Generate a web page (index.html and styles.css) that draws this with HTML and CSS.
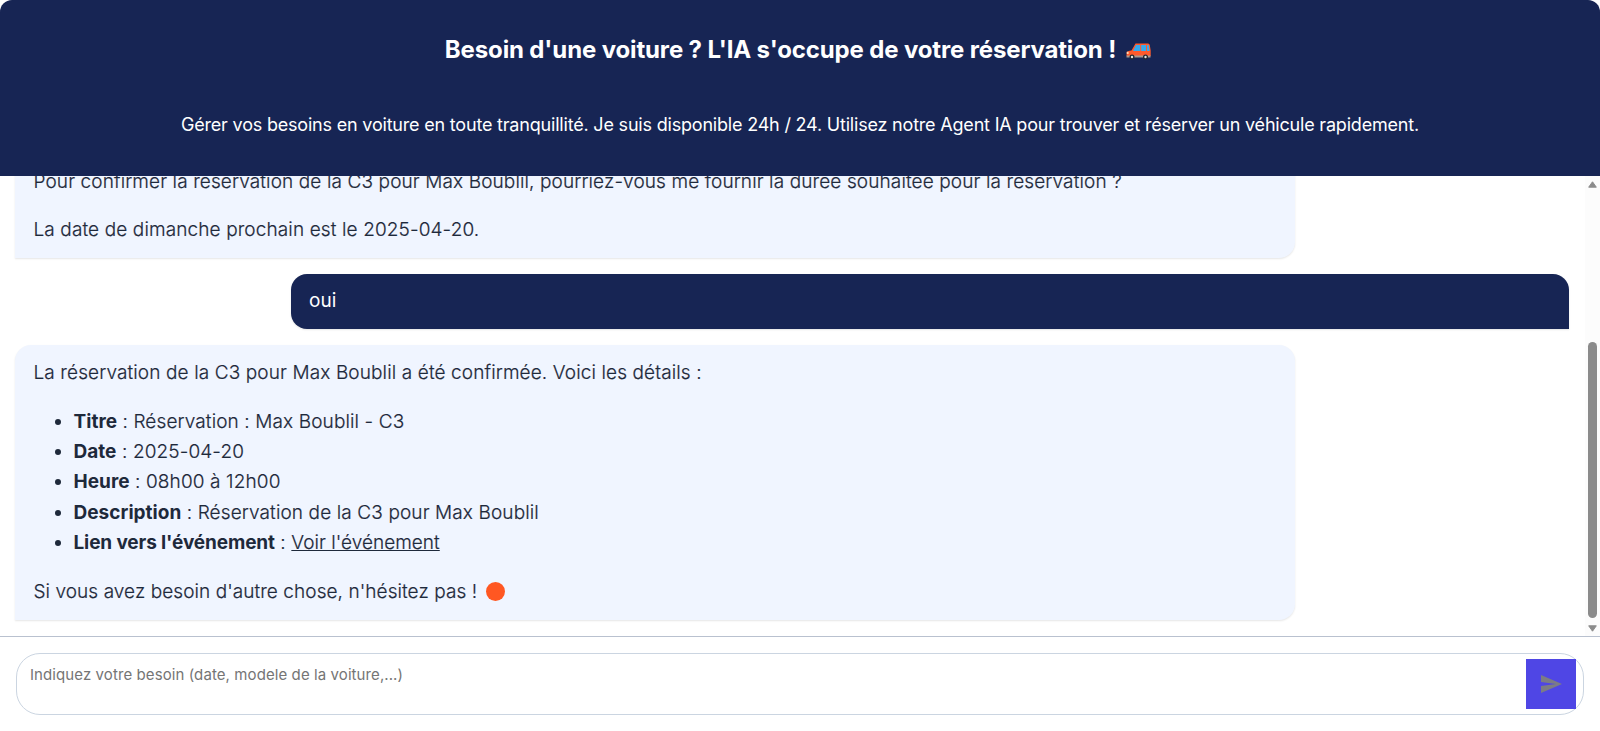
FILE: index.html
```html
<!DOCTYPE html>
<html lang="fr">
<head>
    <meta charset="UTF-8">
    <meta name="viewport" content="width=device-width, initial-scale=1.0">
    <title>Agent IA - Réservation de voiture</title>
    <link rel="stylesheet" href="styles.css">
</head>
<body>

    <div class="chat">
        <header class="chat-header">
            <h1><span class="title-text">Besoin d'une voiture ? L'IA s'occupe de votre réservation !</span>
                <svg class="car" viewBox="0 0 25 17" width="25" height="17">
                    <path d="M9.500 .6 H22 Q23.500 .6 23.800 2.300 L24.700 7.500 V13 H.6 V9 Q1 8 5.500 7.400 Z" fill="#ff5a2c"/>
                    <path d="M10 2 H14.200 V8 H7 Z M15.200 2 H20 V8 H15.200 Z M21 2 H22.600 L23.700 8 H21 Z" fill="#35aaf0"/>
                    <path d="M.5 12.500 H24.500 V14.500 H.5 Z" fill="#a9988f"/>
                    <path d="M.8 8.800 H2.600 V11 H.8 Z" fill="#ffd9b0"/>
                    <circle cx="6" cy="14" r="2.500" fill="#22272e"/>
                    <circle cx="19.500" cy="14" r="2.500" fill="#22272e"/>
                    <circle cx="6" cy="14" r="1.200" fill="#e4e4e4"/>
                    <circle cx="19.500" cy="14" r="1.200" fill="#e4e4e4"/>
                </svg>
            </h1>
            <p>Gérer vos besoins en voiture en toute tranquillité. Je suis disponible 24h / 24. Utilisez notre Agent IA pour trouver et réserver un véhicule rapidement.</p>
        </header>

        <div class="chat-body">
            <div class="messages">
                <div class="message bot">
                    <p>Pour confirmer la réservation de la C3 pour Max Boublil, pourriez-vous me fournir la durée souhaitée pour la réservation ?</p>
                    <p>La date de dimanche prochain est le 2025-04-20.</p>
                </div>
                <div class="message user">
                    <p>oui</p>
                </div>
                <div class="message bot">
                    <p>La réservation de la C3 pour Max Boublil a été confirmée. Voici les détails :</p>
                    <ul>
                        <li><strong>Titre</strong> : Réservation : Max Boublil - C3</li>
                        <li><strong>Date</strong> : 2025-04-20</li>
                        <li><strong>Heure</strong> : 08h00 à 12h00</li>
                        <li><strong>Description</strong> : Réservation de la C3 pour Max Boublil</li>
                        <li><strong class="link-label">Lien vers l'événement</strong> : <a href="#">Voir l'événement</a></li>
                    </ul>
                    <p class="closing">Si vous avez besoin d'autre chose, n'hésitez pas ! <span class="dot"></span></p>
                </div>
            </div>
            <div class="scrollbar">
                <svg viewBox="0 0 9 7" width="9" height="7"><path d="M4.500 .8 L8.300 6.200 H.7 Z" fill="#8b8b8b" stroke="#8b8b8b" stroke-linejoin="round"/></svg>
                <div class="thumb"></div>
                <svg viewBox="0 0 9 7" width="9" height="7"><path d="M4.500 6.200 L8.300 .8 H.7 Z" fill="#8b8b8b" stroke="#8b8b8b" stroke-linejoin="round"/></svg>
            </div>
        </div>

        <footer class="chat-footer">
            <div class="input-box">
                <textarea placeholder="Indiquez votre besoin (date, modele de la voiture,...)"></textarea>
                <button class="send" aria-label="Envoyer">
                    <svg viewBox="0 0 24 24" width="24" height="24"><path fill="#7c7c85" d="m2 21l21-9L2 3v7l15 2l-15 2z"/></svg>
                </button>
            </div>
        </footer>
    </div>

</body>
</html>
```

FILE: styles.css
```css
* {
    box-sizing: border-box;
}
body {
    margin: 0;
    font-family: Inter, "Liberation Sans", sans-serif;
    background-color: #fff;
}
.chat {
    display: flex;
    flex-direction: column;
    height: 100vh;
    overflow: hidden;
}
.chat-header {
    flex: none;
    display: flex;
    flex-direction: column;
    align-items: center;
    height: 176px;
    padding-top: 33px;
    background-color: #172554;
    color: #fff;
    border-radius: 12px 12px 0 0;
}
.chat-header h1 {
    display: flex;
    align-items: center;
    gap: 10px;
    margin: 0;
    padding-right: 4px;
    font-size: 24px;
    line-height: 34px;
    font-weight: 700;
    letter-spacing: -0.14px;
}
.car {
    margin-top: 2px;
}
.chat-header p {
    margin: 44px 0 0;
    font-size: 18px;
    line-height: 28px;
    letter-spacing: -0.195px;
}
.chat-body {
    flex: 1;
    display: flex;
    min-height: 0;
}
.messages {
    flex: 1;
    display: flex;
    flex-direction: column;
    justify-content: flex-end;
    overflow: hidden;
    padding: 0 16px 16px 15px;
}
.message {
    flex: none;
    width: 1280px;
    padding: 13px 18.5px;
    margin-top: 16px;
    font-size: 19px;
    line-height: 30.4px;
    font-weight: 300;
    letter-spacing: 0.12px;
    -webkit-text-stroke: 0.2px currentColor;
    box-shadow: 0 1px 2px rgba(0, 0, 0, 0.1);
}
.message p {
    margin: 0;
}
.message p + p {
    margin-top: 17.4px;
}
.message ul {
    margin: 18px 0;
    padding-left: 40px;
}
.message strong {
    font-weight: 700;
    letter-spacing: 0.03px;
    -webkit-text-stroke: 0;
}
.message .link-label {
    letter-spacing: -0.12px;
}
.message a {
    color: inherit;
    letter-spacing: 0.03px;
}
.message .closing {
    letter-spacing: 0.07px;
}
.bot {
    background-color: #f0f5ff;
    color: #1e293b;
    border-radius: 16px 16px 16px 0;
}
.user {
    align-self: flex-end;
    width: 1278px;
    padding: 12.3px 18px;
    font-weight: 400;
    letter-spacing: 0;
    -webkit-text-stroke: 0;
    background-color: #172554;
    color: #fff;
    border-radius: 16px 16px 0 16px;
}
.dot {
    display: inline-block;
    width: 19px;
    height: 19px;
    margin-left: 3px;
    vertical-align: -3px;
    border-radius: 50%;
    background-color: #ff5722;
}
.scrollbar {
    width: 15px;
    display: flex;
    flex-direction: column;
    align-items: center;
    padding: 5px 0 4px;
    background-color: #fcfcfc;
}
.thumb {
    width: 9px;
    height: 276px;
    margin: auto 0 7px;
    border-radius: 5px;
    background-color: #8b8b8b;
}
.chat-footer {
    flex: none;
    height: 95px;
    padding: 16px;
    border-top: 1px solid #b9c1cf;
}
.input-box {
    display: flex;
    align-items: center;
    height: 62px;
    padding-right: 7px;
    border: 1px solid #cbd5e1;
    border-radius: 24px;
}
.input-box textarea {
    flex: 1;
    height: 60px;
    padding: 12px 13px;
    border: none;
    outline: none;
    resize: none;
    background: transparent;
    font-family: inherit;
    font-size: 15px;
    line-height: 18px;
    letter-spacing: 0.09px;
}
.input-box textarea::placeholder {
    color: #757575;
}
.send {
    display: flex;
    align-items: center;
    justify-content: center;
    width: 50px;
    height: 50px;
    padding: 0;
    border: none;
    background-color: #4f46e5;
}
```
